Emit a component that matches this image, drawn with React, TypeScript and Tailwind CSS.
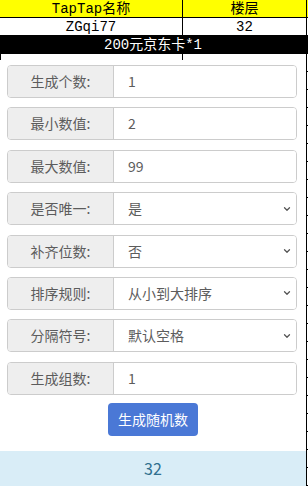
import { ChevronDown } from "lucide-react";

const App = () => {
  const fields = [
    { label: "生成个数:", value: "1", select: false },
    { label: "最小数值:", value: "2", select: false },
    { label: "最大数值:", value: "99", select: false },
    { label: "是否唯一:", value: "是", select: true },
    { label: "补齐位数:", value: "否", select: true },
    { label: "排序规则:", value: "从小到大排序", select: true },
    { label: "分隔符号:", value: "默认空格", select: true },
    { label: "生成组数:", value: "1", select: false },
  ];

  const cellFont = { fontFamily: '"Liberation Mono", "Noto Sans CJK SC", monospace' };
  const uiFont = { fontFamily: '"Noto Sans CJK SC", "Noto Sans", sans-serif' };

  return (
    <div className="flex w-[308px] h-[486px] overflow-hidden bg-white">
      <div className="w-[306px] flex flex-col">
        {/* Sheet header */}
        <div className="text-[14px] leading-none text-black" style={cellFont}>
          <div className="flex h-[18px] bg-[#ffff00] border-b border-black">
            <div className="w-[183px] flex items-center justify-center border-r border-black">TapTap名称</div>
            <div className="flex-1 flex items-center justify-center">楼层</div>
          </div>
          <div className="flex h-[17px] bg-white">
            <div className="w-[183px] flex items-center justify-center border-r border-black">ZGqi77</div>
            <div className="flex-1 flex items-center justify-center">32</div>
          </div>
          <div className="h-[19px] bg-black text-white flex items-center justify-center">200元京东卡*1</div>
          <div className="flex h-[6px]">
            <div className="w-[183px] border-l border-r border-black"></div>
          </div>
        </div>

        {/* Form */}
        <div className="px-[7px] pt-[5px] flex flex-col gap-[9.4px]" style={uiFont}>
          {fields.map((f, i) => (
            <div key={i} className="flex h-[33px] w-[290px] border border-[#cccccc] rounded-[4px] overflow-hidden text-[14px] text-[#5c5c5c]">
              <div className="w-[106px] bg-[#eeeeee] border-r border-[#cccccc] flex items-center justify-center">
                {f.label}
              </div>
              <div className="flex-1 bg-white flex items-center pl-[14px] pr-[4px]">
                <span className="flex-1">{f.value}</span>
                {f.select && <ChevronDown className="w-[10px] h-[10px] text-[#555555]" strokeWidth={3} />}
              </div>
            </div>
          ))}
        </div>

        <div className="flex justify-center mt-[8px]" style={uiFont}>
          <button className="w-[90px] h-[33px] rounded-[4px] bg-[#4a78d6] text-white text-[14px]">生成随机数</button>
        </div>

        <div className="mt-[15px] h-[35px] bg-[#d9edf7] flex items-center justify-center text-[16px] text-[#31708f]" style={uiFont}>
          32
        </div>
      </div>

      {/* Sheet edge */}
      <div className="w-[2px] border-l border-black flex flex-col">
        <div className="h-[18px] bg-[#ffff00] border-b border-black"></div>
        <div className="h-[17px]"></div>
        <div className="h-[19px] bg-black"></div>
        {Array.from({ length: 24 }).map((_, i) => (
          <div key={i} className="h-[18px] shrink-0 border-b border-black"></div>
        ))}
      </div>
    </div>
  );
};

export default App;
